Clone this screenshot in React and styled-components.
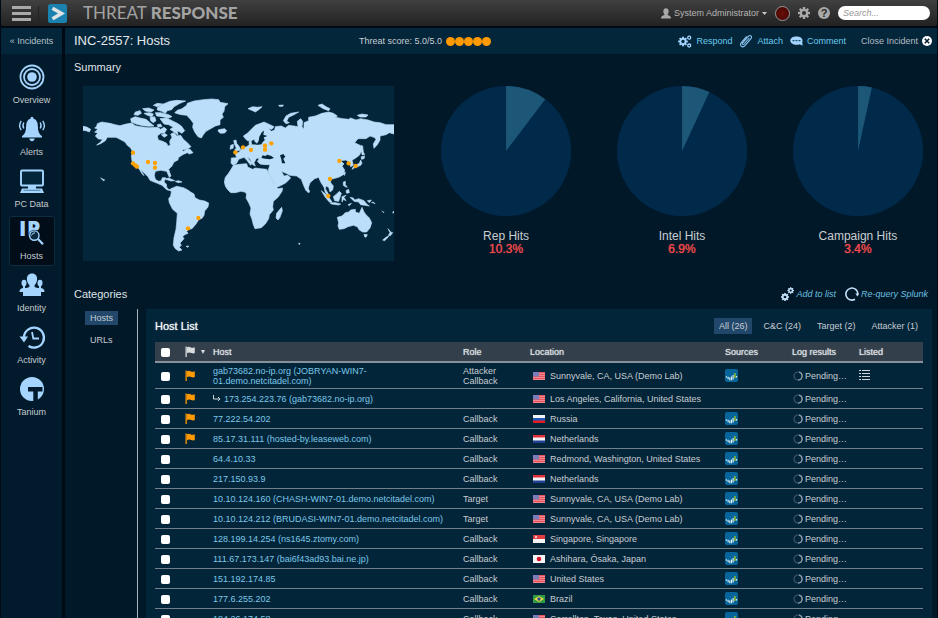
import React, { useState } from "react"
import styled, { createGlobalStyle } from "styled-components"

const navItems = [
  { name: "Overview", icon: OverviewIcon },
  { name: "Alerts", icon: AlertsIcon },
  { name: "PC Data", icon: PcIcon },
  { name: "Hosts", icon: HostsIcon },
  { name: "Identity", icon: IdentityIcon },
  { name: "Activity", icon: ActivityIcon },
  { name: "Tanium", icon: TaniumIcon },
]

const charts = [
  { label: "Rep Hits", value: 10.3 },
  { label: "Intel Hits", value: 6.9 },
  { label: "Campaign Hits", value: 3.4 },
]

const filters = ["All (26)", "C&C (24)", "Target (2)", "Attacker (1)"]

const hosts = [
  {
    host: "gab73682.no-ip.org (JOBRYAN-WIN7-01.demo.netcitadel.com)",
    role: ["Attacker", "Callback"],
    flag: "us",
    location: "Sunnyvale, CA, USA (Demo Lab)",
    flagged: true,
    source: true,
    listed: true,
  },
  {
    host: "173.254.223.76 (gab73682.no-ip.org)",
    role: [],
    flag: "us",
    location: "Los Angeles, California, United States",
    flagged: true,
    child: true,
  },
  { host: "77.222.54.202", role: ["Callback"], flag: "ru", location: "Russia", flagged: true, source: true },
  {
    host: "85.17.31.111 (hosted-by.leaseweb.com)",
    role: ["Callback"],
    flag: "nl",
    location: "Netherlands",
    flagged: true,
    source: true,
  },
  { host: "64.4.10.33", role: ["Callback"], flag: "us", location: "Redmond, Washington, United States", source: true },
  { host: "217.150.93.9", role: ["Callback"], flag: "nl", location: "Netherlands", source: true },
  {
    host: "10.10.124.160 (CHASH-WIN7-01.demo.netcitadel.com)",
    role: ["Target"],
    flag: "us",
    location: "Sunnyvale, CA, USA (Demo Lab)",
    source: true,
  },
  {
    host: "10.10.124.212 (BRUDASI-WIN7-01.demo.netcitadel.com)",
    role: ["Target"],
    flag: "us",
    location: "Sunnyvale, CA, USA (Demo Lab)",
    source: true,
  },
  {
    host: "128.199.14.254 (ns1645.ztomy.com)",
    role: ["Callback"],
    flag: "sg",
    location: "Singapore, Singapore",
    source: true,
  },
  {
    host: "111.67.173.147 (bai6f43ad93.bai.ne.jp)",
    role: ["Callback"],
    flag: "jp",
    location: "Ashihara, Ōsaka, Japan",
    source: true,
  },
  { host: "151.192.174.85", role: ["Callback"], flag: "us", location: "United States", source: true },
  { host: "177.6.255.202", role: ["Callback"], flag: "br", location: "Brazil", source: true },
  { host: "184.26.174.58", role: ["Callback"], flag: "us", location: "Carrollton, Texas, United States", source: true },
]

const App = () => {
  const [page, setPage] = useState("Hosts")
  const [filter, setFilter] = useState(filters[0])
  const [checked, setChecked] = useState([])

  const toggle = (host) =>
    setChecked((prev) => (prev.includes(host) ? prev.filter((h) => h !== host) : [...prev, host]))

  const toggleAll = () => setChecked((prev) => (prev.length === hosts.length ? [] : hosts.map((h) => h.host)))

  return (
    <Page>
      <GlobalStyle />
      <TopBar>
        <MenuButton aria-label="Menu">
          <span />
          <span />
          <span />
        </MenuButton>
        <Logo viewBox="0 0 19 19">
          <rect width="19" height="19" rx="2.5" fill="#1b82b0" />
          <path d="M4.500 4.200 L13.500 9.500 L4.500 14.800" fill="none" stroke="#dfe3e5" strokeWidth="3.600" />
        </Logo>
        <Brand>
          THREAT <b>RESPONSE</b>
        </Brand>
        <UserButton>
          <svg width="10" height="11" viewBox="0 0 10 11" fill="#a9a9a9">
            <ellipse cx="5" cy="3.400" rx="2.600" ry="3.200" />
            <path d="M0 10.500 C0 8.200 1.200 7.700 3.500 7 V5.500 H6.500 V7 C8.800 7.700 10 8.200 10 10.500Z" />
          </svg>
          System Administrator
          <svg width="5" height="3" viewBox="0 0 5 3">
            <path d="M0 0H5L2.500 3Z" fill="#c8c8c8" />
          </svg>
        </UserButton>
        <StatusLight />
        <IconButton aria-label="Settings">
          <svg width="12" height="12" viewBox="-6 -6 12 12">
            <Gear r={6} fill="#a9a9a9" hole="#2d2d2d" />
          </svg>
        </IconButton>
        <IconButton aria-label="Help">
          <HelpMark>?</HelpMark>
        </IconButton>
        <SearchInput placeholder="Search..." aria-label="Search" />
      </TopBar>

      <Body>
        <Sidebar>
          <BackLink href="#incidents">« Incidents</BackLink>
          <Nav>
            {navItems.map(({ name, icon: Icon }) => (
              <NavLink key={name} href={"#" + name} $active={page === name} onClick={() => setPage(name)}>
                <Icon />
                {name}
              </NavLink>
            ))}
          </Nav>
        </Sidebar>

        <Main>
          <IncidentBar>
            <IncidentTitle>INC-2557: Hosts</IncidentTitle>
            <Score>
              Threat score: 5.0/5.0
              <Dots>
                {[1, 2, 3, 4, 5].map((n) => (
                  <i key={n} />
                ))}
              </Dots>
            </Score>
            <Action>
              <svg width="14" height="13" viewBox="0 0 14 13">
                <g transform="translate(5 6.500)">
                  <Gear r={4.8} fill="#a5d5ff" hole="#03263b" />
                </g>
                <circle cx="11.200" cy="2.700" r="1.500" fill="none" stroke="#a5d5ff" strokeWidth="1.300" />
                <circle cx="11.200" cy="10.500" r="1.500" fill="none" stroke="#a5d5ff" strokeWidth="1.300" />
              </svg>
              Respond
            </Action>
            <Action>
              <svg width="14" height="14" viewBox="0 0 14 14" fill="none" stroke="#8cc4ee" strokeWidth="1.100">
                <path d="M10.300 4 L5.200 10 C4.200 11.200 2.800 10 3.700 8.900 L9.300 2.400 C11 .4 13.700 2.500 12 4.600 L6 11.700 C3.600 14.500 -.1 11.500 2.300 8.600 L7.700 2.300" />
              </svg>
              Attach
            </Action>
            <Action>
              <svg width="13" height="10" viewBox="0 0 13 10">
                <path
                  d="M6.300 .5 C10 .5 12.500 2 12.500 4.500 C12.500 5.800 12 6.500 12.700 9.500 C11.500 9.300 10.500 8.700 10 8.200 C5 9.700 .3 8 .3 4.500 C.3 2 3 .5 6.300 .5Z"
                  fill="#a5d5ff"
                />
                <path d="M2.500 4.700H4.500M5.500 4.700H7.500M8.500 4.700H10.500" stroke="#16506f" strokeWidth="1.200" />
              </svg>
              Comment
            </Action>
            <CloseButton>
              Close Incident
              <svg width="10" height="10" viewBox="0 0 10 10">
                <circle cx="5" cy="5" r="5" fill="#fff" />
                <path d="M2.800 2.800L7.200 7.200M7.200 2.800L2.800 7.200" stroke="#021a2c" strokeWidth="1.500" />
              </svg>
            </CloseButton>
          </IncidentBar>

          <Heading>Summary</Heading>
          <SummaryRow>
            <WorldMap />
            <Charts>
              {charts.map((chart) => (
                <Pie key={chart.label} {...chart} />
              ))}
            </Charts>
          </SummaryRow>

          <CategoryHead>
            <Heading>Categories</Heading>
            <ListAction>
              <svg width="13" height="14" viewBox="0 0 13 14">
                <g transform="translate(4 10)">
                  <Gear r={4} fill="#c4e2fb" hole="#011828" />
                </g>
                <g transform="translate(9.700 3.500)">
                  <Gear r={3.3} fill="#c4e2fb" hole="#011828" />
                </g>
              </svg>
              Add to list
            </ListAction>
            <ListAction>
              <svg width="14" height="14" viewBox="0 0 14 14">
                <path d="M10 12.200 A6 6 0 1 1 12.900 7" fill="none" stroke="#c4e2fb" strokeWidth="1.600" />
                <path d="M10.300 6.600 H14.200 L12.500 9.600Z" fill="#c4e2fb" />
              </svg>
              Re-query Splunk
            </ListAction>
          </CategoryHead>

          <Categories>
            <CategoryNav>
              <CategoryLink href="#hosts" $active>
                Hosts
              </CategoryLink>
              <CategoryLink href="#urls">URLs</CategoryLink>
            </CategoryNav>
            <Panel>
              <PanelHead>
                <PanelTitle>Host List</PanelTitle>
                {filters.map((name) => (
                  <FilterButton key={name} $active={filter === name} onClick={() => setFilter(name)}>
                    {name}
                  </FilterButton>
                ))}
              </PanelHead>
              <Table>
                <colgroup>
                  <Col $w={30} />
                  <Col $w={28} />
                  <Col />
                  <Col $w={67} />
                  <Col $w={195} />
                  <Col $w={67} />
                  <Col $w={67} />
                  <Col $w={64} />
                </colgroup>
                <thead>
                  <tr>
                    <Th>
                      <Check
                        type="checkbox"
                        aria-label="Select all hosts"
                        checked={checked.length === hosts.length}
                        onChange={toggleAll}
                      />
                    </Th>
                    <Th>
                      <FlagSort>
                        <FlagMark fill="#d9dcde" />
                        <svg width="4" height="4" viewBox="0 0 4 4">
                          <path d="M0 0H4L2 4Z" fill="#d9dcde" />
                        </svg>
                      </FlagSort>
                    </Th>
                    <Th>Host</Th>
                    <Th>Role</Th>
                    <Th>Location</Th>
                    <Th>Sources</Th>
                    <Th>Log results</Th>
                    <Th>Listed</Th>
                  </tr>
                </thead>
                <tbody>
                  {hosts.map((row) => (
                    <tr key={row.host}>
                      <Td>
                        <Check
                          type="checkbox"
                          aria-label={row.host}
                          checked={checked.includes(row.host)}
                          onChange={() => toggle(row.host)}
                        />
                      </Td>
                      <Td>{row.flagged && <FlagMark fill="#ff9a00" />}</Td>
                      <Td>
                        {row.child && <ChildArrow />}
                        <HostLink href="#host">{row.host}</HostLink>
                      </Td>
                      <Td>
                        {row.role.map((role) => (
                          <div key={role}>{role}</div>
                        ))}
                      </Td>
                      <Td>
                        <Place>
                          <Flag code={row.flag} />
                          {row.location}
                        </Place>
                      </Td>
                      <Td>{row.source && <SourceIcon />}</Td>
                      <Td>
                        <Pending>
                          <Spinner />
                          Pending…
                        </Pending>
                      </Td>
                      <Td>{row.listed && <ListIcon />}</Td>
                    </tr>
                  ))}
                </tbody>
              </Table>
            </Panel>
          </Categories>
        </Main>
      </Body>
    </Page>
  )
}

function Gear({ r, fill, hole }) {
  return (
    <g fill={fill}>
      <circle r={r * 0.72} />
      {[0, 45, 90, 135].map((a) => (
        <rect key={a} x={-r * 0.2} y={-r} width={r * 0.4} height={r * 2} transform={`rotate(${a})`} />
      ))}
      <circle r={r * 0.34} fill={hole} />
    </g>
  )
}

function OverviewIcon() {
  return (
    <NavSvg viewBox="0 0 26 26" fill="none" stroke="#a5d5ff">
      <circle cx="13" cy="13" r="11.500" strokeWidth="1.800" />
      <circle cx="13" cy="13" r="8" strokeWidth="1.800" />
      <circle cx="13" cy="13" r="4.800" fill="#a5d5ff" stroke="none" />
    </NavSvg>
  )
}

function AlertsIcon() {
  return (
    <NavSvg viewBox="0 0 26 26" fill="#a5d5ff">
      <path d="M13 .8 C14 .8 14.500 1.600 14.300 2.600 C17.500 3.600 18.800 6.500 18.900 10.500 C19 15.500 20 17.800 23 20.300 V21.500 H3 V20.300 C6 17.800 7 15.500 7.100 10.500 C7.200 6.500 8.500 3.600 11.700 2.600 C11.500 1.600 12 .8 13 .8Z" />
      <path d="M10.300 22.600 H15.700 C15.300 24.600 14.500 25.200 13 25.200 C11.500 25.200 10.700 24.600 10.300 22.600Z" />
      <g fill="none" stroke="#a5d5ff" strokeWidth="1.400">
        <path d="M4.800 6.500 Q3 9.500 4.800 12.500M2.300 4.800 Q-1 9.500 2.300 14.200" />
        <path d="M21.200 6.500 Q23 9.500 21.200 12.500M23.700 4.800 Q27 9.500 23.700 14.200" />
      </g>
    </NavSvg>
  )
}

function PcIcon() {
  return (
    <NavSvg viewBox="0 0 26 26">
      <rect x="2" y="2.500" width="22" height="15" rx="1" fill="#03263b" stroke="#a5d5ff" strokeWidth="1.900" />
      <path d="M9 18 H17 V20.500 H23 L25 25 H1 L3 20.500 H9Z" fill="#a5d5ff" />
      <path d="M4.500 22.300H21.500" stroke="#2f6a90" strokeWidth=".8" />
    </NavSvg>
  )
}

function HostsIcon() {
  return (
    <NavSvg viewBox="0 0 26 26">
      <text x="0 8" y="16" fontFamily="Open Sans, sans-serif" fontWeight="800" fontSize="21" fill="#a5d5ff">
        IP
      </text>
      <circle cx="15.300" cy="15.600" r="5.800" fill="#02101c" />
      <circle cx="15.300" cy="15.600" r="4.700" fill="#0b2a40" stroke="#a5d5ff" strokeWidth="1.400" />
      <path d="M12.500 15.500 Q13 12.800 16 12.800" fill="none" stroke="#a5d5ff" />
      <path d="M19 19L24 24.200" stroke="#a5d5ff" strokeWidth="2.200" />
    </NavSvg>
  )
}

function IdentityIcon() {
  return (
    <NavSvg viewBox="0 0 26 26" fill="#a5d5ff">
      <path d="M13 1.500 C16.300 1.500 18.300 3.800 18.100 7.300 C17.900 10 16.900 12 15.600 13 V15 C19 16 21.800 17 22 19 V24 H4 V19 C4.200 17 7 16 10.400 15 V13 C9.100 12 8.100 10 7.900 7.300 C7.700 3.800 9.700 1.500 13 1.500Z" />
      <ellipse cx="5" cy="11" rx="2.500" ry="3.300" />
      <ellipse cx="21" cy="11" rx="2.500" ry="3.300" />
      <path d="M4 13 H6 V16 L8 16.500 L3.800 20 H.5 C.5 17.500 1.500 16.500 4 16Z" />
      <path d="M22 13 H20 V16 L18 16.500 L22.200 20 H25.500 C25.500 17.500 24.500 16.500 22 16Z" />
    </NavSvg>
  )
}

function ActivityIcon() {
  return (
    <NavSvg viewBox="0 0 26 26" fill="none" stroke="#a5d5ff">
      <path d="M5 13 A10 10 0 1 1 9.500 22" strokeWidth="2.300" />
      <path d="M.5 12.500 H9 L5 18.500Z" fill="#a5d5ff" stroke="none" />
      <path d="M13 8 L14.300 14.500 H20" strokeWidth="1.800" />
    </NavSvg>
  )
}

function TaniumIcon() {
  return (
    <NavSvg viewBox="0 0 26 26">
      <circle cx="13" cy="13" r="12" fill="#a5d5ff" />
      <path d="M9 11 H23.500 V15.500 H18.800 V26 H14.300 V15.500 H9Z" fill="#021a2b" />
    </NavSvg>
  )
}

function FlagMark({ fill }) {
  return (
    <FlagSvg viewBox="0 0 10 11" fill={fill}>
      <path d="M.5 .5 H1.800 V11 H.5Z" />
      <path d="M2 1.200 Q3.800 .2 5.500 1.200 T9.800 1.200 V7 Q8 7.800 6.300 6.900 T2 6.900Z" />
    </FlagSvg>
  )
}

function ChildArrow() {
  return (
    <ArrowSvg viewBox="0 0 8 7" fill="none" stroke="#c9d3da">
      <path d="M.5 0 V4 H7M5 2 L7 4 L5 6" />
    </ArrowSvg>
  )
}

function SourceIcon() {
  return (
    <BlockSvg width="13" height="13" viewBox="0 0 13 13">
      <rect width="13" height="13" rx="2" fill="#07659b" />
      <path
        d="M1.300 7.300V8.800M3.100 7.800V10.300M4.800 8.500V11.300M6.500 7.500V11.300M8.100 6V10.500M11.600 7V8.500"
        stroke="#e8f3f8"
        strokeWidth="1.100"
      />
      <path d="M9.900 4V9" stroke="#a8c81e" strokeWidth="1.300" />
    </BlockSvg>
  )
}

function Spinner() {
  return (
    <svg width="10" height="10" viewBox="0 0 10 10" fill="none">
      <circle cx="5" cy="5" r="4" stroke="#3d5768" strokeWidth="1.200" />
      <path d="M6 1.100 A4 4 0 0 1 5 9" stroke="#93a4af" strokeWidth="1.200" />
    </svg>
  )
}

function ListIcon() {
  return (
    <BlockSvg width="11" height="11" viewBox="0 0 11 11">
      <path d="M0 .5H2M3 .5H11M0 3.500H2M3 3.500H11M0 6.500H2M3 6.500H11M0 9.500H2M3 9.500H11" stroke="#cfd7dc" />
    </BlockSvg>
  )
}

function Flag({ code }) {
  return (
    <svg width="12" height="8" viewBox="0 0 12 8">
      <rect width="12" height="8" fill="#f4f4f4" />
      {code === "us" && (
        <>
          <rect width="12" height="8" fill="#ef8a92" />
          <path d="M0 .5H12M0 2.500H12M0 4.500H12M0 6.500H12" stroke="#e6525c" />
          <rect width="6" height="4.500" fill="#7a7db8" />
        </>
      )}
      {code === "ru" && (
        <>
          <rect y="3" width="12" height="3" fill="#1c57b5" />
          <rect y="5.500" width="12" height="2.500" fill="#df1b24" />
        </>
      )}
      {code === "nl" && (
        <>
          <rect width="12" height="2.500" fill="#e0323c" />
          <rect y="5.500" width="12" height="2.500" fill="#1d3f94" />
        </>
      )}
      {code === "sg" && (
        <>
          <rect width="12" height="4" fill="#e23b43" />
          <circle cx="3" cy="2" r="1.200" fill="#f6c5c8" />
        </>
      )}
      {code === "jp" && <circle cx="6" cy="4" r="2.300" fill="#d8122a" />}
      {code === "br" && (
        <>
          <rect width="12" height="8" fill="#2f9b45" />
          <path d="M1 4L6 1L11 4L6 7Z" fill="#f0dc3c" />
          <circle cx="6" cy="4" r="1.700" fill="#274a9a" />
        </>
      )}
    </svg>
  )
}

function Pie({ label, value }) {
  const angle = (value / 100) * Math.PI * 2
  const x = 65 + 65 * Math.sin(angle)
  const y = 65 - 65 * Math.cos(angle)

  return (
    <Chart>
      <svg viewBox="0 0 130 130">
        <circle cx="65" cy="65" r="65" fill="#01294a" />
        <path d={`M65 65V0A65 65 0 0 1 ${x} ${y}Z`} fill="#1c5778" />
      </svg>
      <figcaption>
        {label}
        <Percent>{value}%</Percent>
      </figcaption>
    </Chart>
  )
}

const land = [
  // north america
  "M74 156 L80 151 82 143 95 138 108 140 120 142 135 146 150 149 165 145 185 141 196 149 212 152 235 155 262 154 272 160 282 154 290 160 284 170 272 172 262 180 265 192 278 196 290 202 294 210 301 208 299 196 306 184 302 174 312 170 320 180 332 178 340 190 352 200 363 212 352 219 336 222 340 226 352 219 360 220 369 230 358 234 352 230 338 236 325 245 324 252 312 258 306 270 296 280 300 292 303 300 298 304 290 286 272 283 256 286 253 298 256 310 266 316 274 314 277 305 287 305 282 318 289 324 290 334 297 341 306 338 304 345 290 341 276 328 262 322 240 313 234 302 222 290 212 280 222 299 216 293 205 275 192 270 186 254 184 240 188 228 182 216 172 208 165 198 150 190 138 184 112 184 106 194 92 203 80 207 92 198 98 190 85 189 76 180 83 172 74 168 84 160Z",
  "M39 151L50 153 62 160 58 168 48 164 39 163Z",
  // arctic islands
  "M262 95L275 86 300 76 320 73 347 75 330 82 312 92 305 101 292 104 286 112 275 106 262 102Z",
  "M250 88L262 82 278 84 262 92Z",
  "M196 108L210 104 214 112 204 118 192 116Z",
  "M182 128L196 122 210 126 228 130 240 140 252 150 236 151 218 149 198 144 184 138Z",
  "M218 98L236 96 252 102 244 108 226 105Z",
  "M222 112L238 110 250 114 246 122 232 118Z",
  "M240 124L254 122 258 134 250 140 242 134Z",
  "M256 110L272 110 296 116 306 122 296 126 276 122 260 120Z",
  "M270 128L290 126 306 134 322 142 334 150 344 164 336 172 322 164 324 178 312 168 300 160 310 154 296 146 282 144Z",
  "M262 146L272 144 276 152 264 153Z",
  "M274 176L284 172 292 178 282 184Z",
  // greenland, iceland
  "M314 110L322 103 336 98 350 88 352 82 372 75 400 71 425 69 446 71 450 79 474 83 464 92 462 106 456 114 460 124 450 132 450 146 436 150 422 158 408 166 400 176 394 186 384 182 374 168 368 154 370 142 360 128 350 118 334 116 322 113Z",
  "M444 162L452 160 464 158 470 164 464 171 452 172 446 168Z",
  // caribbean
  "M284 309L296 306 314 314 303 315Z",
  "M316 316L326 314 336 318 324 320Z",
  // south america
  "M303 338L310 335 320 331 340 335 352 341 362 348 372 354 375 365 388 372 404 375 416 381 414 393 404 405 402 418 396 427 386 431 378 444 366 458 356 460 350 466 354 472 344 476 338 482 342 488 336 495 330 501 334 508 328 514 336 522 326 525 316 518 310 508 312 485 318 460 320 440 322 412 308 400 298 380 296 368 302 360 304 348Z",
  "M348 511L356 510 354 514Z",
  // africa
  "M463 318L466 304 474 294 482 282 490 268 508 265 530 263 533 273 548 280 556 276 572 278 590 280 598 296 606 312 616 330 624 338 638 336 636 346 624 364 610 376 608 392 610 402 598 416 596 428 586 444 574 455 555 458 550 446 546 430 540 414 543 396 536 380 528 366 530 354 524 348 512 346 496 350 482 350 472 340 466 330Z",
  "M620 412L628 402 635 394 637 404 630 424 624 432 618 426Z",
  // europe and asia
  "M483 262L484 246 500 245 496 234 508 228 518 216 530 212 538 206 537 196 543 194 545 206 560 207 574 206 580 197 586 192 580 184 572 188 562 202 556 198 552 190 544 194 532 194 526 188 520 180 532 172 544 160 556 148 572 142 582 138 600 146 612 152 606 160 596 158 604 166 614 162 616 152 634 150 646 156 656 148 672 150 684 152 682 136 692 128 698 136 696 152 702 158 702 140 716 134 716 124 736 120 756 112 776 108 790 112 802 120 796 124 818 128 836 130 842 126 858 132 872 128 894 132 912 138 930 140 948 146 972 146 972 174 958 170 948 176 930 180 930 192 922 206 912 217 910 204 918 190 912 184 900 180 888 188 864 188 854 200 870 208 876 222 868 238 854 248 846 252 850 268 842 272 838 260 828 252 812 254 822 264 816 270 824 282 820 296 806 304 790 308 782 310 782 320 790 330 788 342 780 348 776 334 768 330 766 338 774 352 776 362 766 350 762 334 752 318 746 304 734 308 720 320 716 332 714 346 708 344 700 326 694 310 680 300 660 298 648 292 634 286 642 300 654 298 662 306 648 320 634 328 618 335 610 318 598 296 594 284 600 266 584 266 570 264 562 256 568 248 560 246 552 260 556 270 548 266 540 248 532 244 546 262 542 268 530 252 522 244 506 250 500 262 490 268Z",
  // british isles
  "M491 194L498 192 500 202 508 212 512 222 498 226 494 222 499 216 494 206Z",
  "M482 208L490 205 490 216 480 220Z",
  // svalbard, novaya zemlya, severnaya zemlya
  "M534 98L548 92 562 94 576 92 568 100 556 108 548 104Z",
  "M626 88L640 87 638 91 628 91Z",
  "M640 134L648 120 662 112 686 108 672 116 656 124 650 136 658 140 648 143Z",
  "M744 88L756 84 768 92 780 98 776 104 760 98Z",
  "M862 118L876 114 894 117 888 123 870 123Z",
  // sakhalin, japan
  "M872 208L878 210 880 228 884 236 876 236Z",
  "M874 242L884 240 882 248 874 250Z",
  "M872 252L876 262 872 268 862 272 852 276 846 280 850 272 860 266 868 262Z",
  // taiwan, philippines, sri lanka
  "M822 290L826 288 824 298 821 296Z",
  "M820 318L826 316 826 326 832 334 826 332 820 328Z",
  "M828 344L836 340 838 350 830 352Z",
  "M714 340L719 344 717 350 712 348Z",
  // indonesia, new guinea
  "M754 344L766 354 778 366 786 378 778 378 766 364Z",
  "M780 380L796 380 812 384 806 387 784 384Z",
  "M790 362L800 354 808 346 814 352 810 364 806 376 794 374Z",
  "M816 362L828 358 822 364 828 374 820 370 816 378Z",
  "M840 364L850 366 854 372 866 368 882 374 890 384 898 390 884 388 872 386 866 378 852 376Z",
  "M892 374L904 372 898 380Z",
  "M834 386L844 382 838 389Z",
  // australia, tasmania, new zealand
  "M802 424L816 420 826 410 836 408 842 402 856 400 856 408 868 412 876 394 882 408 888 416 898 426 905 440 900 456 890 468 878 468 868 462 862 452 850 448 834 452 822 458 808 460 804 450 806 440Z",
  "M882 475L892 476 888 484 884 482Z",
  "M954 458L962 468 968 470 960 480 956 476 960 470Z",
  "M958 478L954 484 944 494 938 492 948 484Z",
  "M904 380L910 378 916 384M936 404L942 410 938 408M968 408L972 406 970 412Z",
  "M92 306L104 312 100 314Z",
  "M686 502L690 502 688 506Z",
]

const seas = [
  // baltic, black sea, caspian
  "M560 206L566 194 568 182 576 168 582 164 580 176 592 180 582 184 578 196 572 204Z",
  "M574 246L578 238 586 240 592 236 604 240 612 246 600 250 586 248Z",
  "M630 238L640 234 646 242 640 248 646 262 636 262 634 250Z",
]

const pins = [
  [189, 230], [189, 262], [201, 272], [196, 268], [234, 258], [255, 261], [255, 275], [385, 426], [354, 457],
  [496, 229], [519, 214], [543, 222], [585, 209], [585, 221], [604, 202], [808, 255], [836, 262], [857, 270],
  [780, 309], [775, 360],
]

function WorldMap() {
  return (
    <MapSvg viewBox="39 30 933 525" role="img">
      <rect x="39" y="30" width="933" height="525" fill="#03263a" />
      <g fill="#bbdffb" stroke="#bbdffb" strokeWidth="2" strokeLinejoin="round">
        {land.map((d) => (
          <path key={d} d={d} />
        ))}
      </g>
      <g fill="#03263a">
        {seas.map((d) => (
          <path key={d} d={d} />
        ))}
      </g>
      <g fill="#ffa200">
        {pins.map(([x, y]) => (
          <circle key={x + "-" + y} cx={x} cy={y} r="6.500" />
        ))}
      </g>
    </MapSvg>
  )
}

const GlobalStyle = createGlobalStyle`
  * {
    box-sizing: border-box;
  }
  body {
    margin: 0;
    background: #000a14;
    color: #c9cdd1;
    font: 9px/10px "Liberation Sans", Arial, sans-serif;
  }
  a {
    text-decoration: none;
  }
  button {
    font: inherit;
    color: inherit;
    background: none;
    border: none;
    padding: 0;
    cursor: pointer;
  }
`

const Page = styled.div`
  height: 100vh;
  display: flex;
  flex-direction: column;
  gap: 2px;
  overflow: hidden;
`

const TopBar = styled.header`
  flex: none;
  height: 26px;
  margin: 0 1px;
  padding: 0 7px 0 11px;
  display: flex;
  align-items: center;
  border-radius: 0 0 2px 2px;
  background: linear-gradient(#404040, #222);
`

const MenuButton = styled.button`
  width: 27px;
  padding-right: 7px;
  margin-right: 9px;
  display: grid;
  gap: 3px;
  border-right: 1px solid #222;

  span {
    height: 3px;
    background: #a9a9a9;
  }
`

const Logo = styled.svg`
  width: 19px;
  height: 19px;
`

const Brand = styled.h1`
  flex: 1;
  margin: 0 0 0 16px;
  font: 400 17px/20px Lato, sans-serif;
  color: #a3a3a3;

  b {
    font-weight: 900;
  }
`

const UserButton = styled.button`
  display: flex;
  align-items: center;
  gap: 3px;
  margin-right: 8px;
  color: #b5b5b5;
`

const StatusLight = styled.span`
  width: 15px;
  height: 15px;
  margin-right: 8px;
  border: 1px solid #999;
  border-radius: 50%;
  background: radial-gradient(#6d0d08, #3a0502);
`

const IconButton = styled.button`
  height: 12px;
  margin-right: 8px;

  svg {
    display: block;
  }
`

const HelpMark = styled.span`
  display: block;
  width: 12px;
  height: 12px;
  border-radius: 50%;
  background: #a9a9a9;
  color: #2a2a2a;
  font-size: 11px;
  line-height: 12px;
  font-weight: bold;
`

const SearchInput = styled.input`
  width: 92px;
  height: 14px;
  padding: 0 5px;
  border: none;
  border-radius: 7px;
  background: #fff;
  font: italic 9px/12px "Liberation Sans", Arial, sans-serif;

  &::placeholder {
    color: #999;
  }
`

const Body = styled.div`
  flex: 1;
  min-height: 0;
  display: flex;
  gap: 3px;
  padding: 0 1px;
`

const Sidebar = styled.aside`
  flex: 0 0 61px;
  background: #021b2c;
`

const BackLink = styled.a`
  display: block;
  height: 26px;
  line-height: 26px;
  text-align: center;
  color: #b5c0c8;
  background: #03263b;
`

const Nav = styled.nav`
  display: flex;
  flex-direction: column;
  align-items: center;
  gap: 2px;
  padding-top: 6px;
`

const NavLink = styled.a`
  width: 46px;
  height: 50px;
  display: flex;
  flex-direction: column;
  align-items: center;
  gap: 5px;
  padding-top: 3px;
  border: 1px solid ${({ $active }) => ($active ? "#0c2c40" : "transparent")};
  border-radius: 3px;
  background: ${({ $active }) => ($active ? "#010d18" : "none")};
  color: #c4cacf;
`

const NavSvg = styled.svg`
  width: 26px;
  height: 26px;
  overflow: visible;
`

const Main = styled.main`
  flex: 1;
  min-width: 0;
  display: flex;
  flex-direction: column;
  background: #011828;
`

const IncidentBar = styled.div`
  flex: none;
  height: 26px;
  padding: 0 5px 0 9px;
  display: flex;
  align-items: center;
  background: #03263b;
`

const IncidentTitle = styled.h2`
  flex: 0 0 285px;
  margin: 0;
  font-size: 13px;
  line-height: 16px;
  font-weight: normal;
  color: #e3e6e8;
`

const Score = styled.div`
  flex: 1;
  display: flex;
  align-items: center;
  gap: 4px;
`

const Dots = styled.span`
  display: flex;

  i {
    width: 9px;
    height: 9px;
    border-radius: 50%;
    background: #ff9a00;
  }
`

const Action = styled.button`
  display: flex;
  align-items: center;
  gap: 4px;
  margin-right: 7px;
  color: #6ccbec;
`

const CloseButton = styled(Action)`
  margin: 0 0 0 8px;
  color: #b5bcc2;
`

const Heading = styled.h3`
  margin: 0;
  padding-left: 9px;
  font-size: 11px;
  line-height: 26px;
  font-weight: normal;
  color: #dfe3e6;
`

const SummaryRow = styled.section`
  display: flex;
  gap: 47px;
  padding: 6px 14px 0 18px;
`

const MapSvg = styled.svg`
  flex: 311 1 0;
  min-width: 0;
`

const Charts = styled.div`
  flex: 482 1 0;
  display: flex;
  justify-content: space-between;
`

const Chart = styled.figure`
  flex: 0 0 27%;
  margin: 0;
  text-align: center;
  font-size: 12px;
  line-height: 13px;

  svg {
    display: block;
    margin-bottom: 14px;
  }
`

const Percent = styled.div`
  color: #f4494b;
  text-shadow: 0 0 1px #f4494b;
`

const CategoryHead = styled.div`
  display: flex;
  align-items: center;
  gap: 9px;
  padding: 20px 9px 0 0;

  ${Heading} {
    flex: 1;
  }
`

const ListAction = styled.button`
  display: flex;
  align-items: center;
  gap: 2px;
  font-style: italic;
  color: #6cc0e0;
`

const Categories = styled.section`
  flex: 1;
  min-height: 0;
  display: flex;
  padding: 2px 5px 0 20px;
`

const CategoryNav = styled.nav`
  flex: 0 0 53px;
  margin-right: 8px;
  display: flex;
  flex-direction: column;
  align-items: flex-start;
  gap: 8px;
  padding-top: 2px;
  border-right: 1px solid #a9b2b9;
`

const CategoryLink = styled.a`
  padding: 2px 5px;
  color: #c4cacf;
  background: ${({ $active }) => ($active ? "#21486b" : "none")};
`

const Panel = styled.div`
  flex: 1;
  min-width: 0;
  padding: 0 9px;
  overflow: hidden;
  background: #03253a;
`

const PanelHead = styled.div`
  height: 33px;
  display: flex;
  align-items: center;
  gap: 6px;
`

const PanelTitle = styled.h4`
  flex: 1;
  margin: 0;
  font-size: 11px;
  line-height: 12px;
  font-weight: normal;
  color: #f1f3f4;
  text-shadow: 0 0 1px #f1f3f4;
`

const FilterButton = styled.button`
  padding: 3px 5px;
  background: ${({ $active }) => ($active ? "#21486b" : "none")};
`

const Table = styled.table`
  width: 100%;
  table-layout: fixed;
  border-spacing: 0;

  tbody tr:first-child {
    height: 26px;
  }
`

const Col = styled.col`
  width: ${({ $w }) => ($w ? $w + "px" : "auto")};
`

const Th = styled.th`
  height: 21px;
  padding: 0;
  border-bottom: 2px solid #86919a;
  background: #333f4a;
  text-align: left;
  font-weight: normal;
  color: #dde0e3;
  text-shadow: 0 0 1px #dde0e3;
`

const Td = styled.td`
  height: 20px;
  padding: 0 4px 0 0;
  border-bottom: 1px solid #71808a;
  white-space: nowrap;

  &:nth-child(3) {
    white-space: normal;
  }
`

const Check = styled.input`
  appearance: none;
  display: block;
  width: 9px;
  height: 9px;
  margin: 1px 0 0 6px;
  border-radius: 2px;
  background: #fff;

  &:checked {
    background: #62bde3;
  }
`

const FlagSort = styled.span`
  display: flex;
  align-items: center;
  gap: 6px;
`

const FlagSvg = styled.svg`
  display: block;
  width: 10px;
  height: 11px;
`

const BlockSvg = styled.svg`
  display: block;
`

const ArrowSvg = styled.svg`
  width: 8px;
  height: 7px;
  margin-right: 3px;
`

const HostLink = styled.a`
  color: #7cc8e8;
`

const Place = styled.span`
  display: flex;
  align-items: center;
  gap: 5px;
  padding-left: 3px;
`

const Pending = styled.span`
  display: flex;
  align-items: center;
  gap: 2px;
  padding-left: 1px;
`

export default App
